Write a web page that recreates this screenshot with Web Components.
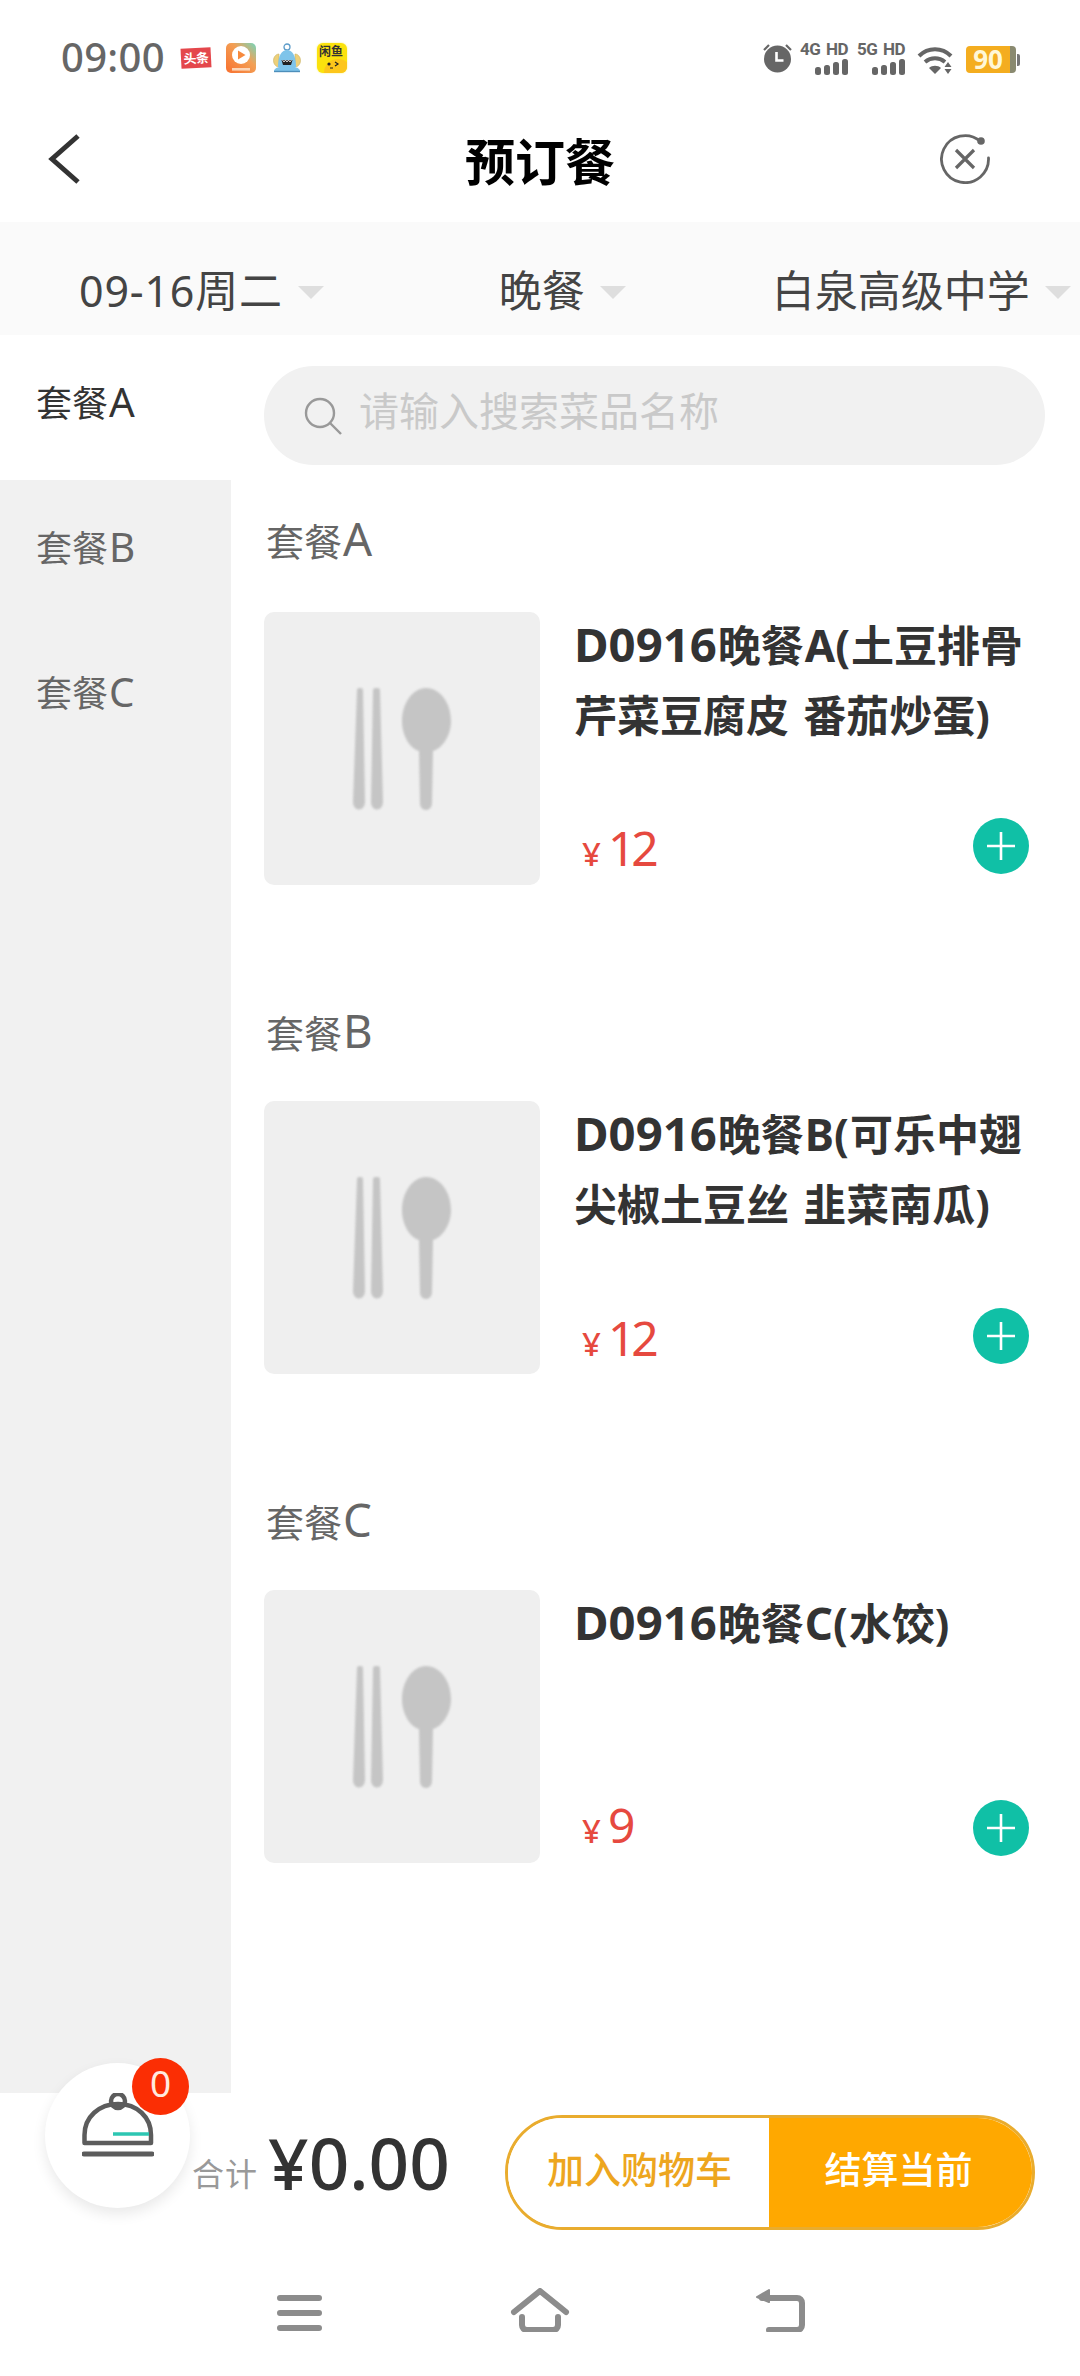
<!DOCTYPE html>
<html lang="zh"><head><meta charset="utf-8"><title>预订餐</title>
<style>
html,body{margin:0;padding:0;background:#fff}
body{width:1080px;height:2376px;overflow:hidden;font-family:"Noto Sans","Noto Sans CJK SC",sans-serif;color:#333}
.lt{font-size:1.1em;line-height:0;margin-right:1px}
.lc{font-size:1.02em;line-height:0;margin:0 1px}
.sl{font-size:1.12em;line-height:0;margin-left:1px}
</style></head><body>
<order-page>
  <status-bar></status-bar>
  <top-nav>预订餐</top-nav>
  <filter-bar>
    <filter-item style="--ml:79px;--ls:.8px">09-16周二</filter-item>
    <filter-item style="--ml:175px">晚餐</filter-item>
    <filter-item style="--ml:146px">白泉高级中学</filter-item>
  </filter-bar>
  <main-area>
    <side-menu slot="side">
      <side-item active>套餐<span class="sl">A</span></side-item>
      <side-item>套餐<span class="sl">B</span></side-item>
      <side-item>套餐<span class="sl">C</span></side-item>
    </side-menu>
    <search-box>请输入搜索菜品名称</search-box>
    <meal-section heading="套餐" letter="A" style="--top:41px;--gap:36px">
      <meal-card price="12" style="--bottom:11px;--po:9px"><span class="lt">D0916</span>晚餐<span class="lc">A(</span>土豆排骨<br>芹菜豆腐皮 番茄炒蛋)</meal-card>
    </meal-section>
    <meal-section heading="套餐" letter="B" style="--top:113px;--gap:33px">
      <meal-card price="12" style="--bottom:10px;--po:9px"><span class="lt">D0916</span>晚餐<span class="lc">B(</span>可乐中翅<br>尖椒土豆丝 韭菜南瓜)</meal-card>
    </meal-section>
    <meal-section heading="套餐" letter="C" style="--top:113px;--gap:33px">
      <meal-card price="9" style="--bottom:7px;--po:0px"><span class="lt">D0916</span>晚餐<span class="lc">C(</span>水饺)</meal-card>
    </meal-section>
  </main-area>
  <cart-bar></cart-bar>
  <system-nav></system-nav>
  <cart-fab></cart-fab>
</order-page>
<template id="t-status">
<style>
:host{display:flex;height:110px;box-sizing:border-box;align-items:flex-start;flex:none;background:#fff}
.time{font:500 40px/40px "Noto Sans",sans-serif;color:#666;margin:37px 0 0 61px;letter-spacing:.3px;width:120px}
svg{display:block;flex:none}
.apps{display:flex;margin-top:43px;gap:15px;align-items:flex-start}
.tt{width:30px;height:20px;margin-top:5px;background:#e4474c;color:#fff;font:700 13px/20px "Noto Sans CJK SC",sans-serif;text-align:center;transform:rotate(-3deg);white-space:nowrap;letter-spacing:-.5px}
.xy{width:30px;height:30px;border-radius:6px;background:#fbe20d;position:relative;overflow:hidden;box-shadow:0 0 2px #f7ef6a}
.xy b{position:absolute;left:2px;top:1px;font:700 12px/14px "Noto Sans CJK SC",sans-serif;color:#333;white-space:nowrap;letter-spacing:0}
.xy i{position:absolute;left:7px;top:16px;width:28px;height:28px;border-radius:50%;background:#fdc61b}
.right{margin-left:auto;margin-right:60px;display:flex;margin-top:42px;align-items:flex-start}
.sig{display:flex;flex-direction:column;align-items:flex-end;width:48px;flex:none}
.lbl{font:700 17px/14px Roboto,"Liberation Sans",sans-serif;color:#666;white-space:nowrap;letter-spacing:-.5px;word-spacing:2px}
.bars{display:flex;gap:3px;align-items:flex-end;height:17px;margin-top:2px}
.bars i{display:block;width:6px;border-radius:2.5px;background:#666}
.batt{width:50px;height:27px;border-radius:4px;background:linear-gradient(90deg,#f4ad1f 44px,#8a8a70 44px);margin-top:4px;font:700 26px/27px "Noto Sans",sans-serif;color:#fff7d6;text-align:center;padding-right:6px;box-sizing:border-box;flex:none}
.cap{width:3px;height:12px;margin:12px 0 0 1px;border-radius:0 2px 2px 0;background:#777;flex:none}
</style>
<span class="time">09:00</span>
<div class="apps">
  <div class="tt">头条</div>
  <svg width="30" height="30" viewBox="0 0 30 30"><defs><linearGradient id="g" x1="0" y1="1" x2="1" y2="0"><stop offset="0" stop-color="#f86f2e"/><stop offset=".6" stop-color="#f3a055"/><stop offset="1" stop-color="#73d7bd"/></linearGradient></defs><rect width="30" height="30" rx="5" fill="url(#g)"/><rect x="6" y="25" width="18" height="2.6" fill="#fbd5b7"/><circle cx="15" cy="12" r="9" fill="#fff"/><path d="M12 7.500 19.500 12 12 16.500Z" fill="#f78a3d"/></svg>
  <svg width="28" height="30" viewBox="0 0 28 30" style="margin:0 1px 0 2px"><circle cx="14" cy="4" r="3" fill="none" stroke="#5d9cc9" stroke-width="1.300"/><path d="M6 11C3 11 .5 14 .5 17.500S3 24 6 24zM22 11c3 0 5.500 3 5.500 6.500S25 24 22 24z" fill="#edd07a" stroke="#c9b162" stroke-width=".6"/><path d="M5 24C5 12 9 7 14 7s9 5 9 17z" fill="#7ec4ea"/><path d="M8.500 17h11l-1.500 5h-8z" fill="#222"/><path d="M9.500 17l1.500 2 1.500-2 1.500 2 1.500-2 1.500 2 1.500-2" stroke="#fff" stroke-width=".8" fill="none"/><path d="M1 28c0-3 6-5 13-5s13 2 13 5z" fill="#7ec4ea"/><path d="M1 28.500h26" stroke="#4d8eba" stroke-width="1.400"/></svg>
  <div class="xy"><b>闲鱼</b><i></i><svg style="position:absolute;left:7px;top:18px" width="18" height="10" viewBox="0 0 18 10"><circle cx="5" cy="3" r="1.600" fill="#222"/><path d="M11 1l3 2-3 2M6 7h3" stroke="#222" stroke-width="1.200" fill="none"/></svg></div>
</div>
<div class="right">
  <svg width="32" height="32" viewBox="0 0 32 32" style="margin-right:6px"><circle cx="15.500" cy="17" r="13.500" fill="#666"/><path d="M14.500 10v8.500h7" stroke="#fff" stroke-width="2.600" fill="none"/><path d="M2 8l5-5M29 8l-5-5" stroke="#666" stroke-width="2.200"/></svg>
  <div class="sig" style="margin-right:9px"><span class="lbl">4G HD</span><span class="bars"><i style="height:8px"></i><i style="height:10px"></i><i style="height:13px"></i><i style="height:16px"></i></span></div>
  <div class="sig" style="margin-right:12px"><span class="lbl">5G HD</span><span class="bars"><i style="height:8px"></i><i style="height:10px"></i><i style="height:13px"></i><i style="height:16px"></i></span></div>
  <svg width="38" height="32" viewBox="0 0 38 32" style="margin-right:11px;margin-top:2px"><g fill="none" stroke="#666" stroke-width="4"><path d="M2 12C11 3 25 3 34 12"/><path d="M8 18c6-5 14-5 20 0"/></g><path d="M12 24c3-3 9-3 12 0l-6 6z" fill="#666"/><path d="M31 18l3.500 5h-7zM27.500 25h7L31 30z" fill="#666"/></svg>
  <div class="batt">90</div><span class="cap"></span>
</div>
</template>
<template id="t-nav">
<style>
:host{display:grid;grid-template-columns:1fr auto 1fr;height:112px;flex:none;align-items:center;padding-bottom:14px;box-sizing:border-box;background:#fff}
h1{margin:0;font:700 50px/60px "Noto Sans CJK SC",sans-serif;color:#000}
svg{display:block}
.b{margin-left:47px}
.c{justify-self:end;margin-right:90px}
</style>
<svg class="b" width="34" height="52" viewBox="0 0 34 52"><path d="M31 3 5 26l26 23" fill="none" stroke="#333" stroke-width="5"/></svg>
<h1><slot></slot></h1>
<svg class="c" width="50" height="50" viewBox="0 0 50 50"><path d="M40 7A23.500 23.500 0 1 0 48.500 24" fill="none" stroke="#666" stroke-width="2.800" stroke-linecap="round"/><path d="M16 16 34 34M34 16 16 34" stroke="#666" stroke-width="3.200"/><circle cx="41" cy="7" r="3.800" fill="#666"/></svg>
</template>
<template id="t-filter">
<style>:host{display:flex;height:113px;flex:none;background:#fafafa;align-items:center;padding-top:24px;box-sizing:border-box}</style><slot></slot>
</template>
<template id="t-fitem">
<style>
:host{display:flex;align-items:center;margin-left:var(--ml,0);flex:none;font-size:43px;line-height:60px;height:60px;color:#444;letter-spacing:var(--ls,0)}
i{display:block;width:0;height:0;border-left:13px solid transparent;border-right:13px solid transparent;border-top:13px solid #dedede;margin-left:15px;margin-top:3px}
</style><slot></slot><i></i>
</template>
<template id="t-main">
<style>
:host{display:grid;grid-template-columns:231px 1fr;height:1758px;flex:none;background:#fff;overflow:hidden}
.c{padding:31px 35px 0 33px;min-width:0}
</style><slot name="side"></slot><div class="c"><slot></slot></div>
</template>
<template id="t-side">
<style>:host{display:block;background:#f1f1f1;height:100%}</style><slot></slot>
</template>
<template id="t-sitem">
<style>
:host{display:flex;height:145px;align-items:center;box-sizing:border-box;padding:0 0 12px 36px;font-size:36px;color:#666;white-space:pre}
:host([active]){background:#fff;color:#333}
</style><slot></slot>
</template>
<template id="t-search">
<style>
:host{display:flex;align-items:center;height:99px;border-radius:50px;background:#f1f1f1;padding-left:40px;font-size:40px;color:#c9c9c9;box-sizing:border-box}
svg{display:block;margin-right:17px;flex:none}
span{display:block;line-height:50px;margin-top:-9px}
</style>
<svg width="38" height="38" viewBox="0 0 38 38"><circle cx="16" cy="16" r="14" fill="none" stroke="#999" stroke-width="2.400"/><path d="m26 26 11 11" stroke="#999" stroke-width="2.400"/></svg><span><slot></slot></span>
</template>
<template id="t-section">
<style>
:host{display:block;margin-top:var(--top,0)}
h2{margin:0 0 var(--gap,36px);height:70px;font:400 38px/70px "Noto Sans","Noto Sans CJK SC",sans-serif;color:#666;padding:0 0 0 2px}
h2 span{font-size:1.2em;line-height:0;margin-left:1px}
</style><h2></h2><slot></slot>
</template>
<template id="t-card">
<style>
:host{display:flex;height:273px;gap:34px}
.img{width:276px;height:273px;flex:none;border-radius:10px;background:#efefef;display:flex;align-items:center;justify-content:center}
.img svg{display:block;filter:blur(1.200px)}
.info{flex:1;min-width:0;display:flex;flex-direction:column;justify-content:space-between;padding-bottom:var(--bottom,11px)}
.t{font:700 43px/70px "Noto Sans","Noto Sans CJK SC",sans-serif;color:#333;margin-top:-1px;word-spacing:3px}
.row{display:flex;align-items:center;justify-content:space-between;height:56px;padding:0 16px 0 8px}
.p{color:#e6493f;display:flex;align-items:baseline;font:400 48px/56px "Noto Sans",sans-serif;padding-top:var(--po,0);letter-spacing:-4px}
.p small{font-size:33px;margin-right:7px;font-weight:500;letter-spacing:0}
.add{width:56px;height:56px;border-radius:50%;background:#10c0a6;display:flex;align-items:center;justify-content:center}
</style>
<div class="img"><svg width="98" height="122" viewBox="0 0 98 122"><g fill="#c5c5c5"><path d="M4 2C4 .5 5.500 0 7 0s3 .5 3 2l2 112c0 4-2.500 7.500-6 7.500S0 118 0 114zM20 2c0-1.500 1.500-2 3.500-2S27 .5 27 2l3 112c0 4-2.500 7.500-6 7.500S18 118 18 114z"/><path d="M73 0C87 0 98 15 98 33c0 16-10 28-18 30l-1 52c0 4-2.500 7-6 7s-6-3-6-7l-1-52C58 61 49 49 49 33 49 15 60 0 73 0z"/></g></svg></div>
<div class="info"><div class="t"><slot></slot></div><div class="row"><div class="p"><small>¥</small><span class="v"></span></div><div class="add"><svg width="30" height="30" viewBox="0 0 30 30"><path d="M15 1v28M1 15h28" stroke="#fff" stroke-width="2.600"/></svg></div></div></div>
</template>
<template id="t-cart">
<style>
:host{display:flex;height:182px;flex:none;box-sizing:border-box;padding:22px 45px 0 192px;background:#fff;align-items:flex-start}
.total{display:flex;align-items:flex-end;width:313px;margin-top:13px}
.l{font-size:32px;color:#999;margin-right:10px;letter-spacing:1px;line-height:50px;margin-bottom:-1px}
.a{font-size:71px;color:#333;line-height:70px;font-weight:500}
.btn{display:flex;width:530px;height:115px;border-radius:58px;overflow:hidden;border:3px solid #e9ac2e;box-sizing:border-box;font-size:37px;font-weight:500}
.b1{width:261px;flex:none;display:flex;align-items:center;justify-content:center;background:#fff;color:#eda61f;padding-bottom:9px;box-sizing:border-box;padding-left:2px}
.b2{flex:1;display:flex;align-items:center;justify-content:center;background:#ffa800;color:#fff;padding-bottom:9px;box-sizing:border-box;padding-right:4px}
</style>
<div class="total"><span class="l">合计</span><span class="a">¥0.00</span></div>
<div class="btn"><div class="b1">加入购物车</div><div class="b2">结算当前</div></div>
</template>
<template id="t-sys">
<style>
:host{display:flex;height:101px;flex:none;justify-content:center;gap:180px;background:#fff;padding-top:13px;box-sizing:border-box}
svg{display:block}
</style>
<svg width="60" height="44" viewBox="0 0 60 44"><g stroke="#8c8c8c" stroke-width="6" stroke-linecap="round"><path d="M10 10h39M10 25h39M10 40h39"/></g></svg>
<svg width="60" height="44" viewBox="0 0 60 44"><g fill="none" stroke="#8c8c8c" stroke-width="6" stroke-linecap="round" stroke-linejoin="round"><path d="M4 24 30 3l26 21"/><path d="M12 29v8c0 3 2 5 5 5h26c3 0 5-2 5-5v-8"/></g></svg>
<svg width="60" height="44" viewBox="0 0 60 44"><path d="M12 10h35c3 0 5 2 5 5v22c0 3-2 5-5 5H19" fill="none" stroke="#8c8c8c" stroke-width="6" stroke-linecap="round"/><path d="M19 2 7 9l12 5z" fill="#8c8c8c" stroke="#8c8c8c" stroke-width="2" stroke-linejoin="round"/></svg>
</template>
<template id="t-fab">
<style>
:host{display:block;position:absolute;left:45px;top:2063px;width:145px;height:145px;border-radius:50%;background:#fff;box-shadow:0 6px 14px rgba(0,0,0,.09)}
svg{position:absolute;left:37px;top:30px}
.badge{position:absolute;left:87px;top:-5px;width:57px;height:57px;border-radius:50%;background:#fb2e04;color:#ffeadf;font-size:37px;line-height:50px;text-align:center}
</style>
<svg width="72" height="64" viewBox="0 0 72 64"><g fill="none" stroke="#5c5c5c" stroke-linecap="round"><circle cx="36" cy="8" r="7" stroke-width="4.500"/><path d="M2.500 50V42C2.500 24 17 11 36 11s33 13 33 31v8z" stroke-width="4.500" stroke-linejoin="round"/><path d="M2 61h68" stroke-width="5"/></g><path d="M31 41h36" stroke="#2dc6b2" stroke-width="3.400"/></svg>
<div class="badge">0</div>
</template>
<script>
function reg(name,tpl,init){
  customElements.define(name,class extends HTMLElement{
    constructor(){super();const r=this.attachShadow({mode:'open'});r.appendChild(document.getElementById(tpl).content.cloneNode(true));}
    connectedCallback(){if(init)init(this,this.shadowRoot);}
  });
}
reg('status-bar','t-status');
reg('top-nav','t-nav');
reg('filter-bar','t-filter');
reg('filter-item','t-fitem');
reg('main-area','t-main');
reg('side-menu','t-side');
reg('side-item','t-sitem');
reg('search-box','t-search');
reg('meal-section','t-section',(h,r)=>{const e=r.querySelector('h2');e.textContent=h.getAttribute('heading');const s=document.createElement('span');s.textContent=h.getAttribute('letter');e.appendChild(s);});
reg('meal-card','t-card',(h,r)=>{r.querySelector('.v').textContent=h.getAttribute('price')});
reg('cart-bar','t-cart');
reg('system-nav','t-sys');
reg('cart-fab','t-fab');
customElements.define('order-page',class extends HTMLElement{constructor(){super();this.attachShadow({mode:'open'}).innerHTML='<style>:host{display:flex;flex-direction:column;width:1080px;height:2376px;position:relative}</style><slot></slot>';}});
</script>
</body></html>
